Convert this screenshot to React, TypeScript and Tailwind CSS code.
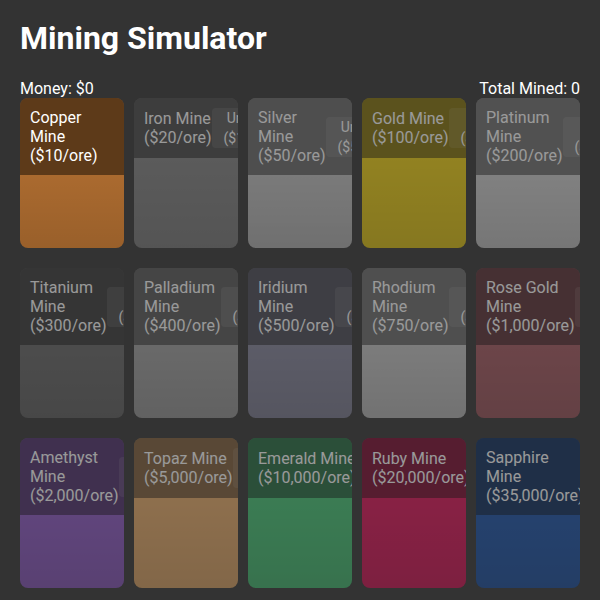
import React from 'react';

interface Mine {
  name: string;
  price: string;
  cost: string;
  color: string;
  owned?: boolean;
}

const mines: Mine[] = [
  { name: 'Copper Mine', price: '$10', cost: '$0', color: 'bg-[#aa6a2f]', owned: true },
  { name: 'Iron Mine', price: '$20', cost: '$1000', color: 'bg-[#838383]' },
  { name: 'Silver Mine', price: '$50', cost: '$5000', color: 'bg-[#c0c0c0]' },
  { name: 'Gold Mine', price: '$100', cost: '$10000', color: 'bg-[#f0d010]' },
  { name: 'Platinum Mine', price: '$200', cost: '$25000', color: 'bg-[#cdcdcd]' },
  { name: 'Titanium Mine', price: '$300', cost: '$50000', color: 'bg-[#666666]' },
  { name: 'Palladium Mine', price: '$400', cost: '$75000', color: 'bg-[#a0a0a0]' },
  { name: 'Iridium Mine', price: '$500', cost: '$100000', color: 'bg-[#85859c]' },
  { name: 'Rhodium Mine', price: '$750', cost: '$150000', color: 'bg-[#c4c4c4]' },
  { name: 'Rose Gold Mine', price: '$1,000', cost: '$200000', color: 'bg-[#a5575f]' },
  { name: 'Amethyst Mine', price: '$2,000', cost: '$400000', color: 'bg-[#8d57c4]' },
  { name: 'Topaz Mine', price: '$5,000', cost: '$1000000', color: 'bg-[#e8ac68]' },
  { name: 'Emerald Mine', price: '$10,000', cost: '$2000000', color: 'bg-[#43c474]' },
  { name: 'Ruby Mine', price: '$20,000', cost: '$4000000', color: 'bg-[#dc1056]' },
  { name: 'Sapphire Mine', price: '$35,000', cost: '$8000000', color: 'bg-[#1850a8]' },
];

const MineCard: React.FC<{ mine: Mine }> = ({ mine }) => {
  return (
    <div
      className={`flex h-[150px] flex-col overflow-hidden rounded-lg ${mine.color} ${
        mine.owned ? '' : 'opacity-50'
      }`}
    >
      <div className="flex items-center bg-black/45 p-2.5">
        <span className="text-base leading-[19px] text-white">
          {mine.name} ({mine.price}/ore)
        </span>
        {!mine.owned && (
          <button className="rounded bg-white/10 px-3 text-center text-sm leading-5 text-white">
            Unlock ({mine.cost})
          </button>
        )}
      </div>
      <div className="flex-1 bg-linear-to-b from-transparent to-black/10" />
    </div>
  );
};

export default function App() {
  return (
    <div className="min-h-screen bg-[#333333] px-5 pt-5 font-['Roboto',sans-serif] text-white">
      <h1 className="mb-[23px] text-[32px] font-bold leading-[37px]">Mining Simulator</h1>
      <div className="flex justify-between text-base leading-[18px]">
        <span>Money: $0</span>
        <span>Total Mined: 0</span>
      </div>
      <div className="grid grid-cols-5 gap-x-2.5 gap-y-5">
        {mines.map((mine) => (
          <MineCard key={mine.name} mine={mine} />
        ))}
      </div>
    </div>
  );
}
